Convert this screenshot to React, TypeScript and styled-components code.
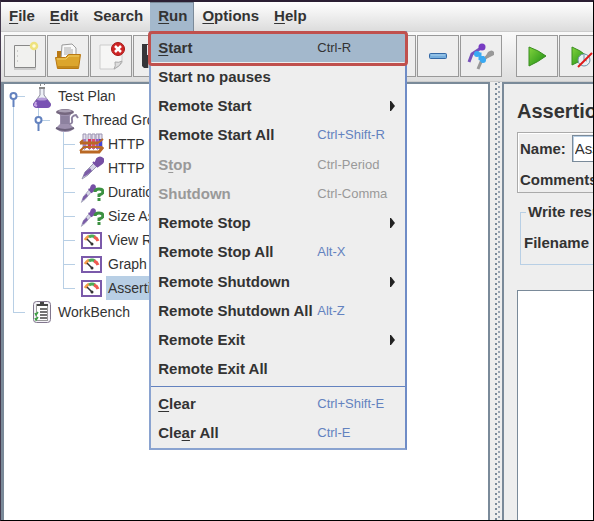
import React from "react";
import styled, { createGlobalStyle, css } from "styled-components";

const GlobalStyle = createGlobalStyle`
  * { box-sizing: border-box; }
  body { margin: 0; overflow: hidden; }
  button, input { font: inherit; color: inherit; }
`;

const Window = styled.div`
  display: flex;
  flex-direction: column;
  height: 100vh;
  border: 1px solid #000;
  border-top: 2px solid #2c2034;
  border-left-color: #463c50;
  background: #eee;
  color: #333;
  font: bold 15px/18px "Liberation Sans", Arial, sans-serif;
  white-space: nowrap;
  overflow: hidden;
`;

const MenuBar = styled.nav`
  display: flex;
  height: 29px;
  flex: none;
  background: linear-gradient(#fff, #dcdcdc);
`;

const MenuSlot = styled.div`
  position: relative;
  display: flex;
`;

const MenuTitle = styled.button<{ $open?: boolean }>`
  border: 0;
  padding: 0 7px 2px 8px;
  background: ${(p) => (p.$open ? "#a3b8cc" : "transparent")};
  box-shadow: ${(p) => (p.$open ? "inset -1px 1px #7a8a99" : "none")};
`;

const Mnemonic = styled.span`
  text-decoration: underline;
  text-decoration-thickness: 1px;
  text-underline-offset: 2px;
`;

const Popup = styled.div`
  position: absolute;
  z-index: 2;
  top: 100%;
  left: -1px;
  width: 258px;
  border: 2px solid #8aa3d0;
  border-right-color: #6f8cc6;
  background: #eee;
`;

const MenuSection = styled.div<{ $second?: boolean }>`
  display: grid;
  grid-auto-rows: 1fr;
  min-height: ${(p) => (p.$second ? "62px" : "353px")};
  ${(p) =>
    p.$second
      ? css`
          border-top: 1px solid #6382bf;
          padding: 2px 0 1px;
        `
      : css`
          padding-bottom: 2px;
        `}
`;

const MenuItem = styled.button<{ $active?: boolean }>`
  display: grid;
  grid-template-columns: 159px 1fr 12px;
  align-items: center;
  border: 0;
  padding: 0 4px 0 7px;
  text-align: left;
  background: ${(p) => (p.$active ? "#a3b8cc" : "transparent")};
  color: #333;
  &:disabled { color: #999; }
`;

const Shortcut = styled.span<{ $tone: string }>`
  font-size: 13px;
  font-weight: normal;
  color: ${(p) => p.$tone};
`;

const Highlight = styled.div`
  position: absolute;
  top: -2px;
  left: -3px;
  right: -3px;
  height: 35px;
  border: 3px solid #c0504d;
  border-radius: 4px;
  pointer-events: none;
`;

const ToolBar = styled.div`
  display: flex;
  flex: none;
  gap: 1px;
  height: 51px;
  padding: 3px 3px 5px;
  border-top: 1px solid #ccc;
  border-bottom: 1px solid #ccc;
  background: linear-gradient(#fafafa, #dedede);
`;

const ToolButton = styled.button`
  display: grid;
  place-items: center;
  flex: none;
  width: 42px;
  height: 42px;
  border: 1px solid #999;
  padding: 0;
  background: #eee;
`;

const ToolGap = styled.span`
  flex: none;
  width: 12px;
`;

const Split = styled.main`
  display: flex;
  flex: 1;
  min-height: 0;
`;

const TreePane = styled.section`
  width: 489px;
  flex: none;
  border: 2px solid #7a8a99;
  border-width: 2px 2px 0 3px;
  background: #fff;
  font-size: 14px;
  font-weight: normal;
`;

const Divider = styled.div`
  flex: none;
  width: 12px;
  background:
    radial-gradient(circle at 6px 2px, #7a8a99 1px, transparent 1px) 0 0 / 12px 5px repeat-y,
    radial-gradient(circle at 9px 2px, #9aa6b3 1px, transparent 1px) 0 3px / 12px 5px repeat-y,
    #eee;
`;

const TreeRow = styled.div`
  display: flex;
  align-items: center;
  height: 24px;
`;

const line = "linear-gradient(#b8cfe5, #b8cfe5)";
const guides: Record<string, string> = {
  none: "none",
  pass: `${line} 9px 0 / 1px 100% no-repeat`,
  tee: `${line} 9px 0 / 1px 100% no-repeat, ${line} 9px 12px / 12px 1px no-repeat`,
  end: `${line} 9px 0 / 1px 12px no-repeat, ${line} 9px 12px / 12px 1px no-repeat`,
  first: `${line} 9px 12px / 1px 12px no-repeat, ${line} 9px 12px / 12px 1px no-repeat`,
};

const Guide = styled.span<{ $kind: string }>`
  flex: none;
  width: 25px;
  height: 24px;
  background: ${(p) => guides[p.$kind]};
`;

const IconSlot = styled.span`
  display: grid;
  place-items: center;
  flex: none;
  width: 25px;
  height: 24px;
`;

const TreeLabel = styled.span<{ $selected?: boolean }>`
  margin-left: 2px;
  padding: 0 2px;
  line-height: 24px;
  background: ${(p) => (p.$selected ? "#b8cfe5" : "transparent")};
`;

const Detail = styled.section`
  display: flex;
  flex-direction: column;
  flex: 1;
  min-width: 0;
  border: 2px solid #7a8a99;
  border-width: 2px 0 0 2px;
  padding: 15px 0 0 13px;
  overflow: hidden;
`;

const Title = styled.h1`
  margin: 0 0 9px;
  font-size: 20px;
  line-height: 24px;
`;

const FieldBox = styled.div`
  display: flex;
  flex-direction: column;
  gap: 9px;
  height: 61px;
  border: 1px solid #aaa;
  border-right: 0;
  padding: 2px 0 2px 2px;
  box-shadow: inset 1px 1px #fff;
`;

const Field = styled.label`
  display: flex;
  align-items: center;
  gap: 6px;
`;

const TextBox = styled.input`
  width: 200px;
  height: 27px;
  flex: none;
  border: 1px solid #7a8a99;
  padding: 0 2px;
  background: #fff;
  font-weight: normal;
  box-shadow: inset 1px 1px #b8cfe5;
`;

const FileGroup = styled.fieldset`
  margin: 10px 0 0 3px;
  border: 1px solid #b8cfe5;
  border-right: 0;
  padding: 13px 0 11px 3px;
  height: 62px;
  min-width: 0;
`;

const Legend = styled.legend`
  margin-left: 2px;
  padding: 0 2px;
`;

const ResultBox = styled.div`
  flex: 1;
  margin-top: 25px;
  border: 1px solid #7a8a99;
  border-width: 1px 0 0 1px;
  background: #fff;
`;

const Arrow = () => (
  <svg width="7" height="12" viewBox="0 0 7 12"><path d="M1 1h1l4 5-4 5H1z" fill="#222" /></svg>
);

const HandleIcon = () => (
  <svg width="25" height="24" viewBox="0 0 25 24" fill="none">
    <path d="M9.500 15v8" stroke="#6382bf" strokeWidth="2" />
    <circle cx="9.500" cy="12" r="3" fill="#fff" stroke="#6382bf" strokeWidth="2" />
  </svg>
);

const FlaskIcon = () => (
  <svg width="20" height="24" viewBox="0 0 20 24">
    <path d="M8 4v7L2 19q-1 4 3 4h10q4 0 3-4l-6-8V4z" fill="#edf0f6" stroke="#8b8b9d" />
    <path d="M5 15h10l4 5q0 4-4 4H5q-4 0-4-4z" fill="#7952b3" />
    <ellipse cx="10" cy="15" rx="5" ry="1.500" fill="#b39bd8" />
    <path d="M4 18l-1 3 2 1" stroke="#c5a5e5" strokeWidth="2" fill="none" />
    <path d="M7 4h6M8 1h1M12 0h1" stroke="#888" strokeWidth="2" />
  </svg>
);

const SpoolIcon = () => (
  <svg width="25" height="24" viewBox="0 0 25 24">
    <path d="M3 4l3 3v9l-4 4q2 4 9 4t9-4l-4-4V8l3-4z" fill="#9d90ae" />
    <path d="M7 9h8M7 11h8M7 13h8M7 15h8" stroke="#7d7290" />
    <ellipse cx="11" cy="4" rx="9" ry="3" fill="#75677f" />
    <ellipse cx="11" cy="3" rx="7" ry="1.500" fill="#aaa0b5" />
    <path d="M2 20q9 4 18 0" stroke="#6c617b" strokeWidth="2" fill="none" />
    <path d="M15 16q4 0 3-4t4-5l2 3" stroke="#8d829f" strokeWidth="2" fill="none" />
  </svg>
);

const TubesIcon = () => (
  <svg width="25" height="22" viewBox="0 0 25 22">
    {[4, 9, 13, 17, 20].map((x, i) => (
      <g key={x}>
        <path d={`M${x} 1v14q1.500 3 3 0V1z`} fill="#e5e1ef" stroke="#9c95b1" />
        <path d={`M${x} 6v9q1.500 2 3 0V6z`} fill={["#a27cc1", "#da3057", "#e04d71", "#9a4fc0", "#4245d7"][i]} />
      </g>
    ))}
    <path d="M1 10h18M1 19h19l4-5" stroke="#b96825" strokeWidth="3" fill="none" />
    <path d="M1 10l3-3M19 10l5-4M1 18l4-4h18" stroke="#b96825" strokeWidth="2" fill="none" />
  </svg>
);

const Dropper = ({ question = false }) => (
  <svg width="24" height="24" viewBox="0 0 24 24" fill="none">
    <g transform={question ? "translate(0 4) scale(.66 .8)" : undefined}>
      <path d="M2 23l3-7L15 6l3 3L8 19z" fill="#d6d5e7" stroke="#9999b0" />
      <path d="M3 21l2-5 5-4 2 3-5 4z" fill="#7c5da8" />
      <path d="M13 6l5 5M15 8l2-5q3-3 6 0 1 3-2 5l-3 2z" fill="#7650a5" stroke="#7650a5" strokeWidth="2" />
    </g>
    {question && <path d="M15 12q0-3 4-3t4 3q0 2-4 3v2M19 18v3" stroke="#3c9142" strokeWidth="3" />}
  </svg>
);

const GaugeIcon = () => (
  <svg width="21" height="17" viewBox="0 0 21 17" fill="none">
    <rect x="1" y="1" width="19" height="15" fill="#fff" stroke="#7b5aaa" strokeWidth="2" />
    <path d="M4 8q2-3 4-4" stroke="#f49b48" strokeWidth="3" />
    <path d="M8 5q3-2 6 0" stroke="#4dab55" strokeWidth="3" />
    <path d="M13 5q3 1 4 4" stroke="#ee5a50" strokeWidth="3" />
    <path d="M6 7l5 5" stroke="#333" strokeWidth="1.500" />
    <circle cx="11" cy="12" r="1.500" fill="#333" />
  </svg>
);

const ClipboardIcon = () => (
  <svg width="20" height="24" viewBox="0 0 20 24" fill="none">
    <rect x="1.500" y="1.500" width="17" height="21" rx="3" fill="#f4f2f7" stroke="#81768d" />
    <rect x="4.500" y="4.500" width="11" height="16" fill="#fff" stroke="#999" />
    <path d="M5 5h11M8 3h4" stroke="#444" strokeWidth="2" />
    <path d="M8 9h7M8 12h7M8 15h7M8 18h7" stroke="#444" strokeWidth="1.500" />
    <path d="M3 13l1 2 2-3M3 18l1 2 2-3" stroke="#3c9f42" strokeWidth="1.500" />
  </svg>
);

const NewIcon = () => (
  <svg width="28" height="30" viewBox="0 0 28 30" fill="none">
    <path d="M3.500 4.500h21v22h-21z" fill="#f1f1ef" stroke="#888" />
    <path d="M3 28h22" stroke="#aaa" />
    <path d="M6 10h1M6 15h1M6 20h1" stroke="#aaa" />
    <circle cx="23" cy="5" r="3" fill="#fffbe0" stroke="#eee27e" strokeWidth="2.500" />
  </svg>
);

const FolderIcon = () => (
  <svg width="28" height="30" viewBox="0 0 28 30">
    <path d="M3 10h5l2 3h14v14H3z" fill="#b97813" />
    <path d="M8 4l10-1 4 4v11H7z" fill="#f9f9f9" stroke="#999" />
    <path d="M10 7h7M10 9h9M10 11h9M10 13h9" stroke="#aaa" />
    <path d="M1.500 16.500h10l3-3h12l-2 14h-21z" fill="#dca52d" stroke="#b97813" />
    <path d="M3 18h9l3-3h10" stroke="#f0ce66" fill="none" />
    <path d="M4 26h20" stroke="#c48a1c" strokeWidth="2" />
  </svg>
);

const CloseIcon = () => (
  <svg width="28" height="30" viewBox="0 0 28 30">
    <path d="M3 4h22v18l-7 6H3z" fill="#f6f6f5" stroke="#ccc" />
    <path d="M17 28q2-3 1-7 4 1 7-1-1 5-8 8" fill="#ddd" stroke="#aaa" />
    <circle cx="21" cy="8" r="6.500" fill="#cf2525" stroke="#a51818" />
    <path d="M18 5l6 6M24 5l-6 6" stroke="#fff" strokeWidth="2.500" />
  </svg>
);

const SaveIcon = () => (
  <svg width="26" height="26" viewBox="0 0 26 26">
    <path d="M1 1h24v24H3l-2-2z" fill="#353539" />
    <path d="M6 2h15v10H6z" fill="#e8e8ec" /><path d="M7 16h12v9H7z" fill="#bbb" />
  </svg>
);

const MinusIcon = () => (
  <svg width="20" height="8" viewBox="0 0 20 8">
    <rect x="1.500" y="1.500" width="17" height="5" rx="1" fill="#76aedd" stroke="#3468a5" />
    <path d="M3 3h14" stroke="#abd2ef" />
  </svg>
);

const ToggleIcon = () => (
  <svg width="28" height="30" viewBox="0 0 28 30" fill="none">
    <path d="M11 28l3-7 9-8" stroke="#999" strokeWidth="3" />
    <path d="M17 18l4-7q4-3 6 0v3l-6 3z" fill="#999" />
    <path d="M2 21l3-8 9-6" stroke="#7852ba" strokeWidth="3" />
    <circle cx="15" cy="6" r="3.500" fill="#773bc2" />
    <path d="M10 13h3v5l3 1v-4" stroke="#39a9f3" strokeWidth="3" />
    <circle cx="10" cy="13" r="3" fill="#39a9f3" /><circle cx="16" cy="19" r="3" fill="#39a9f3" />
  </svg>
);

const PlayIcon = ({ noPause = false }) => (
  <svg width="26" height="26" viewBox="0 0 26 26">
    <defs><linearGradient id="play" x1="0" y1="0" x2="1" y2="1"><stop stopColor="#83d43d" /><stop offset="1" stopColor="#188a12" /></linearGradient></defs>
    <path d={noPause ? "M5 4q8 3 15 9-7 6-15 9z" : "M5 4q9 3 17 9-8 6-17 10z"} fill="url(#play)" stroke="#398d20" />
    {noPause && <>
      <circle cx="17" cy="17" r="6" fill="#e9f1f5" stroke="#6f92a6" />
      <path d="M17 12v5l3 1" stroke="#6f92a6" fill="none" />
      <path d="M11 24L25 10" stroke="#e01919" strokeWidth="2" />
    </>}
  </svg>
);

type Entry = { label: React.ReactNode; keys?: string; sub?: boolean; off?: boolean; active?: boolean };

const runEntries: Entry[] = [
  { label: <><Mnemonic>S</Mnemonic>tart</>, keys: "Ctrl-R", active: true },
  { label: "Start no pauses" },
  { label: "Remote Start", sub: true },
  { label: "Remote Start All", keys: "Ctrl+Shift-R" },
  { label: <>S<Mnemonic>t</Mnemonic>op</>, keys: "Ctrl-Period", off: true },
  { label: "Shutdown", keys: "Ctrl-Comma", off: true },
  { label: "Remote Stop", sub: true },
  { label: "Remote Stop All", keys: "Alt-X" },
  { label: "Remote Shutdown", sub: true },
  { label: "Remote Shutdown All", keys: "Alt-Z" },
  { label: "Remote Exit", sub: true },
  { label: "Remote Exit All" },
];

const clearEntries: Entry[] = [
  { label: <><Mnemonic>C</Mnemonic>lear</>, keys: "Ctrl+Shift-E" },
  { label: <>Cle<Mnemonic>a</Mnemonic>r All</>, keys: "Ctrl-E" },
];

const Entries = ({ items }: { items: Entry[] }) => (
  <>
    {items.map((e, i) => (
      <MenuItem key={i} role="menuitem" disabled={e.off} $active={e.active}>
        <span>{e.label}</span>
        <Shortcut $tone={e.off ? "#999" : e.active ? "#333" : "#6382bf"}>{e.keys}</Shortcut>
        {e.sub && <Arrow />}
      </MenuItem>
    ))}
  </>
);

const treeRows: { label: string; guides: string[]; handle?: boolean; icon: React.ReactNode; selected?: boolean }[] = [
  { label: "Test Plan", guides: ["first"], handle: true, icon: <FlaskIcon /> },
  { label: "Thread Group", guides: ["pass", "end"], handle: true, icon: <SpoolIcon /> },
  { label: "HTTP Request Defaults", guides: ["pass", "none", "tee"], icon: <TubesIcon /> },
  { label: "HTTP Request", guides: ["pass", "none", "tee"], icon: <Dropper /> },
  { label: "Duration Assertion", guides: ["pass", "none", "tee"], icon: <Dropper question /> },
  { label: "Size Assertion", guides: ["pass", "none", "tee"], icon: <Dropper question /> },
  { label: "View Results Tree", guides: ["pass", "none", "tee"], icon: <GaugeIcon /> },
  { label: "Graph Results", guides: ["pass", "none", "tee"], icon: <GaugeIcon /> },
  { label: "Assertion Results", guides: ["pass", "none", "end"], icon: <GaugeIcon />, selected: true },
  { label: "WorkBench", guides: ["end"], icon: <ClipboardIcon /> },
];

const tools: [string, React.ReactNode][][] = [
  [["New", <NewIcon />], ["Open", <FolderIcon />], ["Close", <CloseIcon />], ["Save", <SaveIcon />], ["Save as", <SaveIcon />]],
  [["Cut", null], ["Copy", null], ["Paste", null]],
  [["Expand all", null], ["Collapse all", <MinusIcon />], ["Toggle", <ToggleIcon />]],
  [["Start", <PlayIcon />], ["Start no pauses", <PlayIcon noPause />]],
];

export default function App() {
  return (
    <Window>
      <GlobalStyle />
      <MenuBar>
        {["File", "Edit", "Search", "Run", "Options", "Help"].map((name) => (
          <MenuSlot key={name}>
            <MenuTitle $open={name === "Run"}>
              {name === "Search" ? name : <><Mnemonic>{name[0]}</Mnemonic>{name.slice(1)}</>}
            </MenuTitle>
            {name === "Run" && (
              <Popup role="menu">
                <MenuSection><Entries items={runEntries} /></MenuSection>
                <MenuSection $second><Entries items={clearEntries} /></MenuSection>
                <Highlight />
              </Popup>
            )}
          </MenuSlot>
        ))}
      </MenuBar>
      <ToolBar>
        {tools.map((group, i) => (
          <React.Fragment key={i}>
            {i > 0 && <ToolGap />}
            {group.map(([name, icon]) => <ToolButton key={name} aria-label={name}>{icon}</ToolButton>)}
          </React.Fragment>
        ))}
      </ToolBar>
      <Split>
        <TreePane>
          {treeRows.map((row) => (
            <TreeRow key={row.label}>
              {row.guides.map((kind, i) => (
                <Guide key={i} $kind={kind}>
                  {row.handle && i === row.guides.length - 1 && <HandleIcon />}
                </Guide>
              ))}
              <IconSlot>{row.icon}</IconSlot>
              <TreeLabel $selected={row.selected}>{row.label}</TreeLabel>
            </TreeRow>
          ))}
        </TreePane>
        <Divider />
        <Detail>
          <Title>Assertion Results</Title>
          <FieldBox>
            <Field>Name:<TextBox defaultValue="Assertion Results" /></Field>
            <Field as="span">Comments:</Field>
          </FieldBox>
          <FileGroup>
            <Legend>Write results to file / Read from file</Legend>
            <span>Filename</span>
          </FileGroup>
          <ResultBox />
        </Detail>
      </Split>
    </Window>
  );
}
